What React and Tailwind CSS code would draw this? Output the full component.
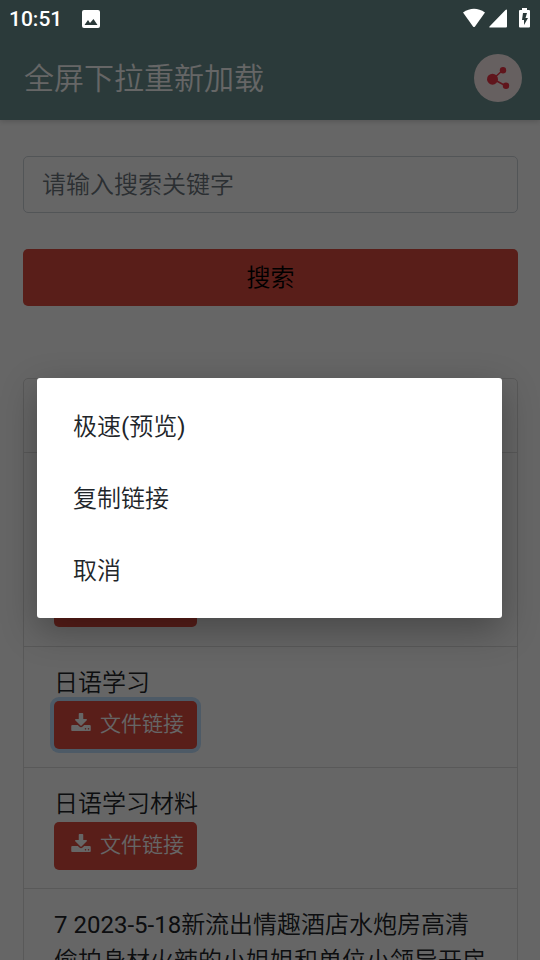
const links = [
  { title: "日语学习", focused: true },
  { title: "日语学习材料" },
  { title: "7 2023-5-18新流出情趣酒店水炮房高清偷拍身材火辣的小姐姐和单位小领导开房" }
];

const menuItems = ["极速(预览)", "复制链接", "取消"];

// Latin runs are set in regular weight, Chinese keeps the lighter one
function MixedText({ children }) {
  return children.split(/([\x20-\x7e]+)/).map((part, i) =>
    i % 2 ? (
      <span key={i} className="font-normal">
        {part}
      </span>
    ) : (
      part
    )
  );
}

function DownloadIcon() {
  return (
    <svg viewBox="0 -128 1664 1536" className="mb-1 h-[18px] w-5 shrink-0 fill-current" aria-hidden="true">
      <path d="M1280 1216q0-26-19-45t-45-19-45 19-19 45 19 45 45 19 45-19 19-45zm256 0q0-26-19-45t-45-19-45 19-19 45 19 45 45 19 45-19 19-45zm128-224v320q0 40-28 68t-68 28h-1472q-40 0-68-28t-28-68v-320q0-40 28-68t68-28h465l135 136q58 56 136 56t136-56l136-136h464q40 0 68 28t28 68zm-325-569q17 41-14 70l-448 448q-18 19-45 19t-45-19l-448-448q-31-29-14-70 17-39 59-39h256v-448q0-26 19-45t45-19h256q26 0 45 19t19 45v448h256q42 0 59 39z" />
    </svg>
  );
}

function FileButton({ focused }) {
  return (
    <button
      type="button"
      className={`flex h-12 items-center gap-[9px] rounded-[5px] bg-[#de4b3f] pr-[13px] pb-0.5 pl-[17px] text-[21px] text-white ${
        focused ? "ring-4 ring-[#c0e1ff]" : ""
      }`}
    >
      <DownloadIcon />
      文件链接
    </button>
  );
}

function StatusBar() {
  return (
    <div className="relative z-20 flex h-9 items-center justify-between px-[9px] pt-px text-white">
      <div className="flex items-center gap-5">
        <span className="text-[21px] leading-8 font-medium">10:51</span>
        <svg viewBox="0 0 18 18" className="size-[18px]" aria-hidden="true">
          <path
            fill="currentColor"
            fillRule="evenodd"
            d="M2 0h14a2 2 0 0 1 2 2v14a2 2 0 0 1-2 2H2a2 2 0 0 1-2-2V2a2 2 0 0 1 2-2zM2.500 15h13l-4-6-3.500 4-2-3z"
          />
        </svg>
      </div>
      <svg viewBox="0 0 68 22" className="h-[22px] w-[68px] fill-current" aria-hidden="true">
        <path d="M0 4.500Q11-3 22 4.500L12 18.500q-1 1-2 0z" />
        <path d="M44 2.500v16a1 1 0 0 1-1 1H27q-1.500 0-.5-1L42.500 2q1.500-1 1.500.5z" />
        <path
          fillRule="evenodd"
          d="M59 0h5v2h2a1 1 0 0 1 1 1v15.500a1 1 0 0 1-1 1h-9a1 1 0 0 1-1-1V3a1 1 0 0 1 1-1h2zM60 5l-1 7h2v5l4-7h-2.500l1.500-5z"
        />
      </svg>
    </div>
  );
}

export default function App() {
  return (
    <div className="relative h-screen overflow-hidden bg-white font-['Roboto','Noto_Sans_CJK_SC',sans-serif] font-[350] text-[#212529]">
      <header className="bg-[#6b9191] shadow-[0_1px_6px_rgba(0,0,0,0.2)]">
        <StatusBar />
        <div className="flex h-[84px] items-center justify-between pr-[18px] pl-6">
          <h1 className="text-[30px] text-white">全屏下拉重新加载</h1>
          <button
            type="button"
            aria-label="分享"
            className="flex size-12 items-center justify-center rounded-full bg-[#fff0f0] text-[#f03648]"
          >
            <svg viewBox="0 0 24 24" className="size-6" aria-hidden="true">
              <path d="M7 13L17 4M7 13l13 7" stroke="currentColor" strokeWidth="1.500" />
              <circle cx="6.500" cy="13.200" r="5.500" fill="currentColor" />
              <circle cx="17" cy="4.300" r="3.200" fill="currentColor" />
              <circle cx="20" cy="19.700" r="3.200" fill="currentColor" />
            </svg>
          </button>
        </div>
      </header>

      <main className="flex flex-col pt-9 pr-[22px] pl-[23px]">
        <form className="flex flex-col gap-9">
          <input
            type="search"
            aria-label="请输入搜索关键字"
            placeholder="请输入搜索关键字"
            className="h-[57px] w-full rounded-[5px] border border-[#ced4da] px-[18px] text-[24px] placeholder:text-[#6c757d]"
          />
          <button type="button" className="h-[57px] rounded-[5px] bg-[#de4b3f] text-[24px] text-black">
            搜索
          </button>
        </form>

        <section className="mt-[72px] rounded-t-[5px] border border-[#dfdfdf]">
          <div className="h-[74px] border-b border-[#dfdfdf]" />
          <ul className="divide-y divide-[#dfdfdf] text-[24px] leading-9">
            <li className="flex h-[194px] flex-col items-start justify-end px-[30px] pt-[18px] pb-[19px]">
              <FileButton />
            </li>
            {links.map((link) => (
              <li key={link.title} className="flex flex-col items-start px-[30px] py-[18px]">
                <p>
                  <MixedText>{link.title}</MixedText>
                </p>
                <FileButton focused={link.focused} />
              </li>
            ))}
          </ul>
        </section>
      </main>

      <div className="absolute inset-0 z-10 flex items-center bg-black/60 pt-9 pr-[38px] pl-[37px]">
        <div
          role="menu"
          className="flex w-full flex-col rounded-[3px] bg-white pt-[13px] pb-[11px] shadow-[0_12px_36px_rgba(0,0,0,0.3)]"
        >
          {menuItems.map((item) => (
            <button key={item} type="button" role="menuitem" className="h-[72px] px-9 text-left text-[24px]">
              <MixedText>{item}</MixedText>
            </button>
          ))}
        </div>
      </div>
    </div>
  );
}
